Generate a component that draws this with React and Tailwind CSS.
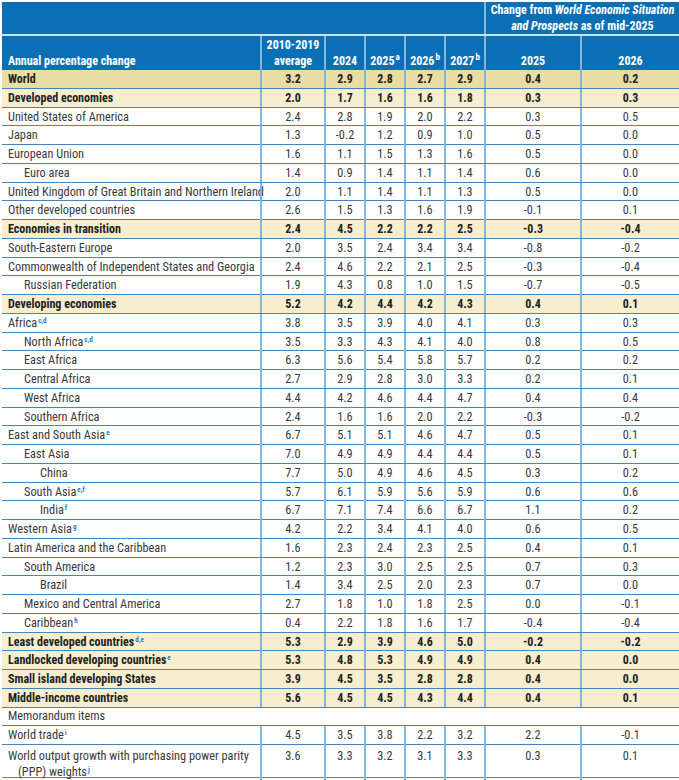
import React from "react";

// columns: label | 2010-2019 avg | 2024 | 2025 | 2026 | 2027 | chg 2025 | chg 2026
const GRID = "grid grid-cols-[258px_64px_40px_40px_40px_40px_96px_99px]";
const FONT = {
  fontFamily: '"Roboto Condensed", "Liberation Sans Narrow", "Arial Narrow", "DejaVu Sans Condensed", Roboto, sans-serif',
};

const rows = [
  { name: "World", v: ["3.2", "2.9", "2.8", "2.7", "2.9", "0.4", "0.2"], bold: true, world: true },
  { name: "Developed economies", v: ["2.0", "1.7", "1.6", "1.6", "1.8", "0.3", "0.3"], bold: true },
  { name: "United States of America", v: ["2.4", "2.8", "1.9", "2.0", "2.2", "0.3", "0.5"] },
  { name: "Japan", v: ["1.3", "-0.2", "1.2", "0.9", "1.0", "0.5", "0.0"] },
  { name: "European Union", v: ["1.6", "1.1", "1.5", "1.3", "1.6", "0.5", "0.0"] },
  { name: "Euro area", v: ["1.4", "0.9", "1.4", "1.1", "1.4", "0.6", "0.0"], indent: 1 },
  { name: "United Kingdom of Great Britain and Northern Ireland", v: ["2.0", "1.1", "1.4", "1.1", "1.3", "0.5", "0.0"] },
  { name: "Other developed countries", v: ["2.6", "1.5", "1.3", "1.6", "1.9", "-0.1", "0.1"] },
  { name: "Economies in transition", v: ["2.4", "4.5", "2.2", "2.2", "2.5", "-0.3", "-0.4"], bold: true },
  { name: "South-Eastern Europe", v: ["2.0", "3.5", "2.4", "3.4", "3.4", "-0.8", "-0.2"] },
  { name: "Commonwealth of Independent States and Georgia", v: ["2.4", "4.6", "2.2", "2.1", "2.5", "-0.3", "-0.4"] },
  { name: "Russian Federation", v: ["1.9", "4.3", "0.8", "1.0", "1.5", "-0.7", "-0.5"], indent: 1 },
  { name: "Developing economies", v: ["5.2", "4.2", "4.4", "4.2", "4.3", "0.4", "0.1"], bold: true },
  { name: "Africa", sup: "c,d", v: ["3.8", "3.5", "3.9", "4.0", "4.1", "0.3", "0.3"] },
  { name: "North Africa", sup: "c,d", v: ["3.5", "3.3", "4.3", "4.1", "4.0", "0.8", "0.5"], indent: 1 },
  { name: "East Africa", v: ["6.3", "5.6", "5.4", "5.8", "5.7", "0.2", "0.2"], indent: 1 },
  { name: "Central Africa", v: ["2.7", "2.9", "2.8", "3.0", "3.3", "0.2", "0.1"], indent: 1 },
  { name: "West Africa", v: ["4.4", "4.2", "4.6", "4.4", "4.7", "0.4", "0.4"], indent: 1 },
  { name: "Southern Africa", v: ["2.4", "1.6", "1.6", "2.0", "2.2", "-0.3", "-0.2"], indent: 1 },
  { name: "East and South Asia", sup: "e", v: ["6.7", "5.1", "5.1", "4.6", "4.7", "0.5", "0.1"] },
  { name: "East Asia", v: ["7.0", "4.9", "4.9", "4.4", "4.4", "0.5", "0.1"], indent: 1 },
  { name: "China", v: ["7.7", "5.0", "4.9", "4.6", "4.5", "0.3", "0.2"], indent: 2 },
  { name: "South Asia", sup: "e,f", v: ["5.7", "6.1", "5.9", "5.6", "5.9", "0.6", "0.6"], indent: 1 },
  { name: "India", sup: "f", v: ["6.7", "7.1", "7.4", "6.6", "6.7", "1.1", "0.2"], indent: 2 },
  { name: "Western Asia", sup: "g", v: ["4.2", "2.2", "3.4", "4.1", "4.0", "0.6", "0.5"] },
  { name: "Latin America and the Caribbean", v: ["1.6", "2.3", "2.4", "2.3", "2.5", "0.4", "0.1"] },
  { name: "South America", v: ["1.2", "2.3", "3.0", "2.5", "2.5", "0.7", "0.3"], indent: 1 },
  { name: "Brazil", v: ["1.4", "3.4", "2.5", "2.0", "2.3", "0.7", "0.0"], indent: 2 },
  { name: "Mexico and Central America", v: ["2.7", "1.8", "1.0", "1.8", "2.5", "0.0", "-0.1"], indent: 1 },
  { name: "Caribbean", sup: "h", v: ["0.4", "2.2", "1.8", "1.6", "1.7", "-0.4", "-0.4"], indent: 1 },
  { name: "Least developed countries", sup: "d,e", v: ["5.3", "2.9", "3.9", "4.6", "5.0", "-0.2", "-0.2"], bold: true },
  { name: "Landlocked developing countries", sup: "e", v: ["5.3", "4.8", "5.3", "4.9", "4.9", "0.4", "0.0"], bold: true },
  { name: "Small island developing States", v: ["3.9", "4.5", "3.5", "2.8", "2.8", "0.4", "0.0"], bold: true },
  { name: "Middle-income countries", v: ["5.6", "4.5", "4.5", "4.3", "4.4", "0.4", "0.1"], bold: true },
];

const indents = ["pl-[6px]", "pl-[22px]", "pl-[38px]"];

function Sup({ children }) {
  return <sup className="text-[7px] font-bold text-[#1a7cc4] -top-[4px] ml-[1px]">{children}</sup>;
}

function Row({ r }) {
  const bg = r.world ? "bg-[#e9dda6]" : r.bold ? "bg-[#f6eecf]" : "bg-white";
  const weight = r.bold ? "font-bold text-[#222] text-[12px]" : "text-[#3a3a3a] text-[12.3px]";
  return (
    <div className={`${GRID} h-[18.75px] border-b border-[#3d88c2] ${bg} ${weight}`}>
      <div className={`flex items-center ${indents[r.indent || 0]} whitespace-nowrap`}>
        <span>
          {r.name}
          {r.sup && <Sup>{r.sup}</Sup>}
        </span>
      </div>
      {r.v.map((x, i) => (
        <div key={i} className="flex items-center justify-center border-l-2 border-[#86b6dc]">
          {x}
        </div>
      ))}
    </div>
  );
}

function YearHead({ year, note }) {
  return (
    <div className="flex items-end justify-center pb-[1px] border-l-2 border-[#7fb6e0]">
      <span>
        {year}
        {note && <sup className="text-[9px] -top-[5px] ml-[1px]">{note}</sup>}
      </span>
    </div>
  );
}

export default function App() {
  return (
    <div className="w-[679px] h-[780px] bg-white pl-[2px] pt-[2px]" style={FONT}>
      {/* top band */}
      <div className="grid grid-cols-[482px_195px] h-[34px] bg-[#0b6fb6] text-white font-bold text-[12px] border-b-2 border-[#cfe2f2]">
        <div />
        <div className="border-l-2 border-[#7fb6e0] flex flex-col items-center justify-center leading-[16px]">
          <span>
            Change from <i>World Economic Situation</i>
          </span>
          <span>
            <i>and Prospects</i> as of mid-2025
          </span>
        </div>
      </div>

      {/* column headings */}
      <div className={`${GRID} h-[34px] bg-[#0b6fb6] text-white font-bold text-[12px] leading-[16px]`}>
        <div className="flex items-end pl-[6px] pb-[1px]">Annual percentage change</div>
        <div className="flex flex-col items-center justify-end pb-[1px] border-l-2 border-[#7fb6e0]">
          <span>2010-2019</span>
          <span>average</span>
        </div>
        <YearHead year="2024" />
        <YearHead year="2025" note="a" />
        <YearHead year="2026" note="b" />
        <YearHead year="2027" note="b" />
        <YearHead year="2025" />
        <YearHead year="2026" />
      </div>

      {rows.map((r) => (
        <Row key={r.name} r={r} />
      ))}

      {/* memorandum */}
      <div className="h-[18.75px] border-b border-[#3d88c2] flex items-center pl-[6px] text-[12.3px] text-[#3a3a3a]">
        Memorandum items
      </div>
      <Row r={{ name: "World trade", sup: "i", v: ["4.5", "3.5", "3.8", "2.2", "3.2", "2.2", "-0.1"] }} />
      <div className={`${GRID} h-[33px] border-b border-[#3d88c2] text-[12.3px] text-[#3a3a3a] leading-[16px]`}>
        <div className="pl-[6px] pt-[3px]">
          World output growth with purchasing power parity
          <div className="pl-[10px]">
            (PPP) weights<Sup>j</Sup>
          </div>
        </div>
        {["3.6", "3.3", "3.2", "3.1", "3.3", "0.3", "0.1"].map((x, i) => (
          <div key={i} className="flex justify-center pt-[3px] border-l-2 border-[#86b6dc]">
            {x}
          </div>
        ))}
      </div>
    </div>
  );
}
